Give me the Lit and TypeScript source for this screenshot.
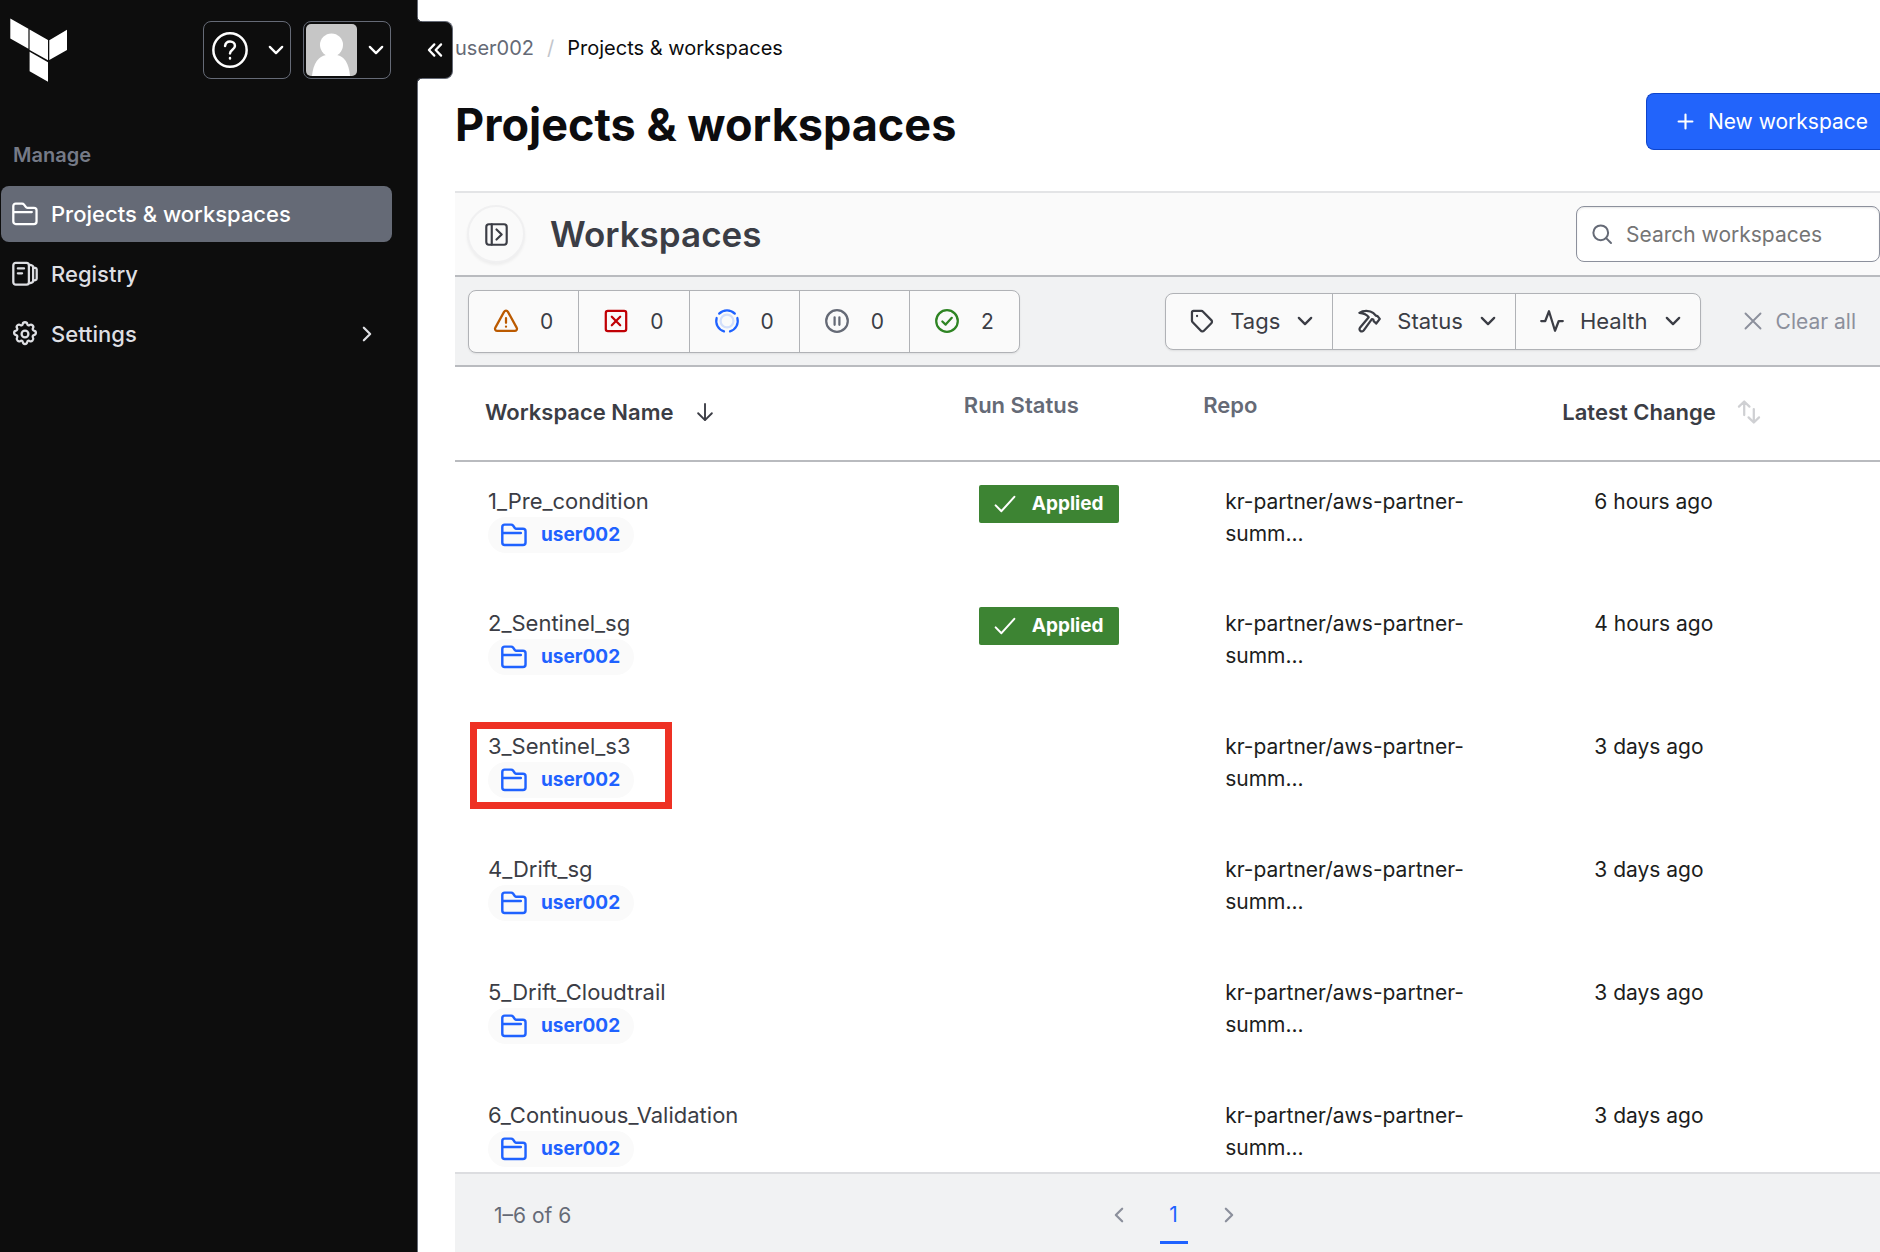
import { LitElement, html, svg, css, nothing, TemplateResult } from "lit";
import { customElement, property } from "lit/decorators.js";

/* Line icons on a 16-unit grid, drawn with the current text colour. */
const icons: Record<string, TemplateResult> = {
  folder: svg`<path d="M.8 12.6V3.1c0-.9.6-1.5 1.5-1.5h3.9c.5 0 .9.2 1.2.6l1.2 1.6c.2.3.5.4.8.4h4.1c.9 0 1.6.6 1.6 1.5v6.9c0 .9-.7 1.6-1.6 1.6H2.3c-.9 0-1.5-.7-1.5-1.6zM.9 6.8h11.3"/>`,
  registry: svg`<rect x=".8" y="1.2" width="9.6" height="13.4" rx="1.5"/><path d="M3.6 4.6h3.8M3.6 7.6h2.6M11 2.4l1.2.3c.5.1.8.5.8 1v8.6c0 .5-.3.9-.8 1l-1.2.3M13.2 3.9l1.3.4c.5.1.7.5.7 1v5.4c0 .5-.2.9-.7 1l-1.3.4"/>`,
  settings: svg`<circle cx="8" cy="8" r="2.1"/><path d="M6.6 1.9c.2-1.5 2.6-1.5 2.8 0 .1.7.8 1 1.4.6 1.3-.9 2.9.7 2.1 1.9-.4.7-.1 1.3.6 1.5 1.6.3 1.6 2.5 0 2.8-.7.2-1 .8-.6 1.5.8 1.3-.8 2.9-2.1 2.1-.6-.4-1.3-.1-1.4.6-.2 1.7-2.6 1.7-2.8 0-.1-.7-.8-1-1.4-.6-1.3.8-2.9-.8-2.1-2.1.4-.7.1-1.3-.6-1.5-1.6-.3-1.6-2.5 0-2.8.7-.2 1-.8.6-1.5-.8-1.3.8-2.8 2.1-1.9.6.4 1.3.1 1.4-.6z"/>`,
  help: svg`<circle cx="8" cy="8" r="7.4"/><path d="M5.8 6.2c.2-1.2 1-2 2.2-2s2.2.8 2.2 2c0 1.6-2.2 1.8-2.2 3.3M8 11.6v.2"/>`,
  down: svg`<path d="M2.5 5.2 8 10.8l5.5-5.6"/>`,
  left: svg`<path d="M10.8 2.5 5.2 8l5.6 5.5"/>`,
  right: svg`<path d="M5.2 2.5 10.8 8l-5.6 5.5"/>`,
  collapse: svg`<path d="M7.4 3 2.6 8l4.8 5M13.4 3 8.6 8l4.8 5"/>`,
  plus: svg`<path d="M8 1.5v13M1.5 8h13"/>`,
  close: svg`<path d="m2 2 12 12M14 2 2 14"/>`,
  panel: svg`<rect x=".9" y=".9" width="14.2" height="14.2" rx="1.8"/><path d="M4.7 1v14M8 4.5 11.6 8 8 11.5"/>`,
  search: svg`<circle cx="7" cy="7" r="5.9"/><path d="m11.3 11.3 3.9 3.9"/>`,
  warning: svg`<path d="M6.7 1.9.9 12.4c-.6 1 .1 2.2 1.3 2.2h11.6c1.2 0 1.9-1.2 1.3-2.2L9.3 1.9c-.6-1-2-1-2.6 0zM8 6v3.2M8 11.7v.1"/>`,
  error: svg`<rect x="1.2" y="1.2" width="13.6" height="13.6" rx="1.4"/><path d="m5.2 5.2 5.6 5.6M10.8 5.2l-5.6 5.6"/>`,
  running: svg`<circle cx="8" cy="8" r="4.3" opacity=".18"/><path d="M2.8 3.1a7.2 7.2 0 0 1 10.4 0M14.9 6a7.2 7.2 0 0 1-4.9 8.9M6 14.9A7.2 7.2 0 0 1 1.1 6"/>`,
  paused: svg`<circle cx="8" cy="8" r="7.2"/><path d="M6.4 5.5v5M9.6 5.5v5"/>`,
  success: svg`<circle cx="8" cy="8" r="7.2"/><path d="m4.9 8.3 2.2 2.1 4.1-4.5"/>`,
  tag: svg`<path d="M1.3 2.3v5.3c0 .5.2.9.5 1.2l5.3 5.6c.6.7 1.6.7 2.2.1l4.9-5c.6-.6.6-1.5 0-2.1L8.7 1.8c-.3-.3-.7-.5-1.1-.5H2.3c-.6 0-1 .4-1 1zM4.7 4.6v.1"/>`,
  hammer: svg`<path d="M1.6 2.6C4 .8 8.5.7 11 2.8l1.6 1.6 1 .3 1.6 1.9-2.4 3.1-1.7-1.6-.2-1-1-.3-5.4 7.5c-.6.8-1.6.9-2.3.3s-.7-1.5-.1-2.2l5.7-6.9C6.5 3.6 4 2.8 1.6 2.6z"/>`,
  pulse: svg`<path d="M.8 8h2.7L6 1.5l4 13L12.5 8h2.7"/>`,
  sorted: svg`<path d="M8 1.5v13M2.5 9 8 14.5 13.5 9"/>`,
  sortable: svg`<path d="M4.8 10V1M1.3 4.4 4.8 1l3.5 3.4M11.2 6v9M7.7 11.6l3.5 3.4 3.5-3.4"/>`,
  check: svg`<path d="m1.2 9 4.2 4.2L14.8 2.8"/>`,
};

@customElement("tf-icon")
export class TfIcon extends LitElement {
  @property() name = "";

  static styles = css`
    :host { display: inline-flex; flex: none; width: 24px; height: 24px; }
    .glyph { width: 100%; height: 100%; overflow: visible; fill: none; stroke: currentColor; stroke-width: var(--icon-stroke, 1.5); stroke-linecap: round; stroke-linejoin: round; }
  `;

  render() {
    return html`<svg class="glyph" viewBox="0 0 16 16" aria-hidden="true">${icons[this.name] ?? nothing}</svg>`;
  }
}

interface Workspace { name: string; project: string; applied?: boolean; repo: string; changed: string; marked?: boolean; }

const repo = "kr-partner/aws-partner-summ...";
const workspaces: Workspace[] = [
  { name: "1_Pre_condition", project: "user002", applied: true, repo, changed: "6 hours ago" },
  { name: "2_Sentinel_sg", project: "user002", applied: true, repo, changed: "4 hours ago" },
  { name: "3_Sentinel_s3", project: "user002", repo, changed: "3 days ago", marked: true },
  { name: "4_Drift_sg", project: "user002", repo, changed: "3 days ago" },
  { name: "5_Drift_Cloudtrail", project: "user002", repo, changed: "3 days ago" },
  { name: "6_Continuous_Validation", project: "user002", repo, changed: "3 days ago" },
];

const counters = [
  { icon: "warning", label: "Needs attention", count: 0 },
  { icon: "error", label: "Errored", count: 0 },
  { icon: "running", label: "Running", count: 0 },
  { icon: "paused", label: "On hold", count: 0 },
  { icon: "success", label: "Applied", count: 2 },
];

const filters = [
  { icon: "tag", label: "Tags" },
  { icon: "hammer", label: "Status" },
  { icon: "pulse", label: "Health" },
];

@customElement("tf-sidebar")
export class TfSidebar extends LitElement {
  static styles = css`
    :host { display: block; position: relative; background: #0d0d0d; border-right: 1px solid #656a76; color: #dedfe3; }
    .top { display: flex; align-items: flex-start; gap: 12px; padding: 18px 26px 0 10px; }
    .logo { width: 58px; height: 64px; margin-right: auto; fill: #fff; }
    .menu { display: flex; align-items: center; justify-content: space-between; width: 88px; height: 58px; margin-top: 3px; padding: 0 5px 0 8px; box-sizing: border-box; border: 1px solid #656a76; border-radius: 8px; background: transparent; color: #fff; }
    .account { padding-left: 2px; }
    .question { width: 36px; height: 36px; --icon-stroke: 1.1; }
    .chevron { width: 18px; height: 18px; --icon-stroke: 2; }
    .avatar { width: 51px; height: 52px; border-radius: 5px; }
    .heading { margin: 0; padding: 57px 13px 0; font-size: 20px; line-height: 32px; font-weight: 600; color: #757a87; }
    .list { display: flex; flex-direction: column; gap: 4px; margin: 0; padding: 15px 25px 0 1px; list-style: none; }
    .item { display: flex; align-items: center; gap: 13px; height: 56px; padding: 0 11px; border-radius: 8px; color: #dedfe3; font-size: 22px; font-weight: 500; text-decoration: none; }
    .item.current { background: #656a76; color: #fff; }
    .item-icon { width: 26px; height: 26px; --icon-stroke: 1.4; }
    .more { width: 18px; height: 18px; margin-left: auto; margin-right: 5px; --icon-stroke: 2; }
    .toggle { position: absolute; top: 21px; left: 100%; display: flex; align-items: center; justify-content: center; width: 36px; height: 58px; padding: 0; border: 1px solid #656a76; border-left: 0; border-radius: 0 8px 8px 0; background: #0d0d0d; color: #fff; }
    .toggle::before, .toggle::after { content: ""; position: absolute; left: 0; width: 5px; height: 5px; }
    .toggle::before { bottom: 100%; background: radial-gradient(circle at 100% 0, transparent 4px, #656a76 4px, #0d0d0d 6px); }
    .toggle::after { top: 100%; background: radial-gradient(circle at 100% 100%, transparent 4px, #656a76 4px, #0d0d0d 6px); }
    .toggle-icon { width: 18px; height: 18px; --icon-stroke: 2; }
  `;

  render() {
    return html`
      <div class="top">
        <svg class="logo" viewBox="0 0 58 64" role="img" aria-label="Terraform">
          <path d="M.3.5 18.4 10.8v20L.3 20.6zM19.6 11.6 38 22v20.3L19.6 31.9zM39.3 22.2 57 11.8V32L39.3 42.1zM19.6 33.8 38 44.3v19.4L19.6 53.3z"/>
        </svg>
        <button class="menu" aria-label="Help">
          <tf-icon class="question" name="help"></tf-icon><tf-icon class="chevron" name="down"></tf-icon>
        </button>
        <button class="menu account" aria-label="Account">
          <svg class="avatar" viewBox="0 0 51 52" aria-hidden="true">
            <rect width="51" height="52" fill="#c6c6c6"/>
            <circle cx="25.5" cy="21" r="11.5" fill="#fff"/>
            <path d="M6 52c1-13 7-20 14-21h11c7 1 12 8 13 21z" fill="#fff"/>
          </svg>
          <tf-icon class="chevron" name="down"></tf-icon>
        </button>
      </div>
      <button class="toggle" aria-label="Collapse navigation"><tf-icon class="toggle-icon" name="collapse"></tf-icon></button>
      <nav aria-label="Manage">
        <h2 class="heading">Manage</h2>
        <ul class="list">
          <li><a class="item current" href="#workspaces" aria-current="page"><tf-icon class="item-icon" name="folder"></tf-icon>Projects &amp; workspaces</a></li>
          <li><a class="item" href="#registry"><tf-icon class="item-icon" name="registry"></tf-icon>Registry</a></li>
          <li><a class="item" href="#settings"><tf-icon class="item-icon" name="settings"></tf-icon>Settings<tf-icon class="more" name="right"></tf-icon></a></li>
        </ul>
      </nav>
    `;
  }
}

@customElement("tf-workspace-table")
export class TfWorkspaceTable extends LitElement {
  @property({ attribute: false }) rows: Workspace[] = [];

  static styles = css`
    :host { display: block; }
    .table { width: 100%; table-layout: fixed; border-collapse: collapse; font-size: 21px; line-height: 32px; }
    .col-name { width: 33.6%; }
    .col-status { width: 16.8%; }
    .col-repo { width: 25.2%; }
    .head { height: 94px; box-sizing: border-box; padding: 22px 0 0 30px; border-bottom: 2px solid #b9bbbf; text-align: left; vertical-align: top; font-size: 22px; font-weight: 600; color: #656a76; }
    .head.sort { padding-top: 29px; }
    .sort-button { display: flex; align-items: center; gap: 21px; padding: 0; border: 0; background: none; font: inherit; color: #3b3d45; }
    .sort-icon { width: 20px; height: 20px; }
    .sort-icon.idle { width: 24px; height: 24px; color: #cfd0d3; }
    .cell { height: 123px; box-sizing: border-box; padding: 24px 0 0; vertical-align: top; color: #1c1d20; }
    .row:last-child .cell { height: 96px; }
    .name-cell { padding-left: 33px; }
    .status-cell { padding-left: 45px; }
    .repo-cell { padding-left: 52px; padding-right: 50px; }
    .changed-cell { padding-left: 62px; }
    .identity { position: relative; display: inline-flex; flex-direction: column; align-items: flex-start; }
    .marked::after { content: ""; position: absolute; top: -9px; bottom: -11px; left: -18px; width: 188px; border: 7px solid #ee3124; pointer-events: none; }
    .name { line-height: 31px; font-size: 22px; color: #3b3d45; text-decoration: none; }
    .project { display: inline-flex; align-items: center; gap: 14px; height: 36px; padding: 0 14px 0 13px; border-radius: 18px; background: #fafafa; color: #1f62ff; font-size: 19px; font-weight: 700; text-decoration: none; }
    .project-icon { width: 26px; height: 26px; }
    .badge { display: inline-flex; align-items: center; gap: 16px; height: 38px; margin-top: -1px; padding: 0 15px; border-radius: 2px; background: #3d8433; color: #fff; font-size: 19px; font-weight: 700; }
    .badge-icon { width: 22px; height: 22px; }
  `;

  render() {
    return html`
      <table class="table">
        <colgroup><col class="col-name" /><col class="col-status" /><col class="col-repo" /><col /></colgroup>
        <thead>
          <tr>
            <th class="head sort" scope="col" aria-sort="ascending"><button class="sort-button">Workspace Name<tf-icon class="sort-icon" name="sorted"></tf-icon></button></th>
            <th class="head" scope="col">Run Status</th>
            <th class="head" scope="col">Repo</th>
            <th class="head sort" scope="col"><button class="sort-button">Latest Change<tf-icon class="sort-icon idle" name="sortable"></tf-icon></button></th>
          </tr>
        </thead>
        <tbody>
          ${this.rows.map((row) => html`
            <tr class="row">
              <td class="cell name-cell">
                <div class="identity ${row.marked ? "marked" : ""}">
                  <a class="name" href="#${row.name}">${row.name}</a>
                  <a class="project" href="#${row.project}"><tf-icon class="project-icon" name="folder"></tf-icon>${row.project}</a>
                </div>
              </td>
              <td class="cell status-cell">${row.applied ? html`<span class="badge"><tf-icon class="badge-icon" name="check"></tf-icon>Applied</span>` : nothing}</td>
              <td class="cell repo-cell">${row.repo}</td>
              <td class="cell changed-cell">${row.changed}</td>
            </tr>`)}
        </tbody>
      </table>
    `;
  }
}

@customElement("app-root")
export class AppRoot extends LitElement {
  static styles = css`
    :host { display: grid; grid-template-columns: 418px minmax(0, 1fr); min-height: 100vh; background: #fff; font-family: Inter, "Liberation Sans", sans-serif; color: #0c0c0e; }
    .main { display: flex; flex-direction: column; padding-left: 37px; }
    .crumbs { display: flex; gap: 13px; padding-top: 32px; font-size: 20px; line-height: 32px; }
    .crumb { color: #656a76; text-decoration: none; }
    .slash { color: #c2c5cb; }
    .title-row { display: flex; align-items: flex-start; justify-content: space-between; padding: 29px 0 34px; }
    .title { margin: 0; font-size: 45px; line-height: 64px; font-weight: 700; }
    .create { display: flex; align-items: center; gap: 14px; height: 57px; padding: 0 12px 0 30px; border: 1px solid #0d44cc; border-right: 0; border-radius: 8px 0 0 8px; background: #2264fb; color: #fff; font: inherit; font-size: 21px; }
    .create-icon { width: 17px; height: 17px; --icon-stroke: 2; }
    .panel { display: flex; flex: 1; flex-direction: column; border-top: 2px solid #e3e4e6; }
    .panel-head { display: flex; align-items: center; height: 82px; background: #fafafa; border-bottom: 2px solid #b9bbbf; }
    .expand { display: flex; align-items: center; justify-content: center; width: 58px; height: 58px; margin: 0 25px 0 12px; padding: 0; border: 2px solid #f0f0f1; border-radius: 50%; background: #fafafa; color: #3b3d45; box-shadow: 0 2px 3px #0000000d; }
    .expand-icon { width: 23px; height: 23px; }
    .subtitle { margin: 0; font-size: 35px; line-height: 48px; font-weight: 600; color: #3b3d45; }
    .search { display: flex; align-items: center; gap: 14px; width: 304px; height: 56px; box-sizing: border-box; margin-left: auto; padding: 0 15px; border: 1px solid #8c909c; border-radius: 8px; background: #fff; color: #656a76; box-shadow: inset 0 1px 2px #0000001a; }
    .search-icon { width: 20px; height: 20px; --icon-stroke: 1.6; }
    .search-input { min-width: 0; flex: 1; padding: 0; border: 0; outline: 0; background: none; font: inherit; font-size: 21px; color: #3b3d45; }
    .search-input::placeholder { color: #757575; opacity: 1; }
    .bar { display: flex; align-items: center; height: 88px; padding-left: 13px; background: #f1f2f3; border-bottom: 2px solid #b9bbbf; }
    .group { display: flex; border: 1px solid #b0b2b6; border-radius: 8px; background: #fafafa; overflow: hidden; box-shadow: 0 1px 2px #00000014; }
    .segment { display: flex; align-items: center; border: 0; border-left: 1px solid #b0b2b6; background: none; font: inherit; color: #3b3d45; }
    .segment:first-child { border-left: 0; }
    .counter { gap: 22px; height: 61px; padding: 0 25px; font-size: 21px; }
    .filter { gap: 16px; height: 55px; padding: 0 18px 0 24px; font-size: 22px; }
    .filters { margin-left: auto; }
    .chevron { width: 18px; height: 18px; --icon-stroke: 2; }
    .warning { color: #bb5a00; }
    .error { color: #c00005; }
    .running { color: #1f62ff; }
    .paused { color: #656a76; }
    .success { color: #2e8423; }
    .clear { display: flex; align-items: center; gap: 13px; margin: 0 24px 0 42px; padding: 0; border: 0; background: none; font: inherit; font-size: 21px; color: #8c909c; }
    .clear-icon { width: 20px; height: 20px; }
    .foot { display: grid; grid-template-columns: 1fr auto 1fr; flex: 1; min-height: 76px; padding: 0 27px 0 39px; border-top: 2px solid #dcdde0; background: #f1f2f3; font-size: 21px; color: #656a76; }
    .range { padding-top: 26px; line-height: 32px; }
    .pager { display: flex; align-items: flex-start; gap: 32px; }
    .step { display: flex; padding: 32px 0 0; border: 0; background: none; color: #8c909c; }
    .page { display: flex; align-items: center; justify-content: center; width: 28px; height: 70px; padding-top: 14px; box-sizing: border-box; border-bottom: 3px solid #1f62ff; color: #1f62ff; text-decoration: none; }
  `;

  render() {
    return html`
      <tf-sidebar></tf-sidebar>
      <main class="main">
        <nav class="crumbs" aria-label="Breadcrumb">
          <a class="crumb" href="#org">user002</a><span class="slash">/</span><span>Projects &amp; workspaces</span>
        </nav>
        <div class="title-row">
          <h1 class="title">Projects &amp; workspaces</h1>
          <button class="create"><tf-icon class="create-icon" name="plus"></tf-icon>New workspace</button>
        </div>
        <section class="panel">
          <div class="panel-head">
            <button class="expand" aria-label="Show projects"><tf-icon class="expand-icon" name="panel"></tf-icon></button>
            <h2 class="subtitle">Workspaces</h2>
            <label class="search">
              <tf-icon class="search-icon" name="search"></tf-icon>
              <input class="search-input" type="text" placeholder="Search workspaces" aria-label="Search workspaces" />
            </label>
          </div>
          <div class="bar">
            <div class="group">
              ${counters.map((c) => html`<button class="segment counter" aria-label="${c.label}: ${c.count}"><tf-icon class="${c.icon}" name=${c.icon}></tf-icon>${c.count}</button>`)}
            </div>
            <div class="group filters">
              ${filters.map((f) => html`<button class="segment filter"><tf-icon name=${f.icon}></tf-icon>${f.label}<tf-icon class="chevron" name="down"></tf-icon></button>`)}
            </div>
            <button class="clear"><tf-icon class="clear-icon" name="close"></tf-icon>Clear all</button>
          </div>
          <tf-workspace-table .rows=${workspaces}></tf-workspace-table>
          <footer class="foot">
            <span class="range">1–6 of 6</span>
            <nav class="pager" aria-label="Pagination">
              <button class="step" aria-label="Previous page"><tf-icon class="chevron" name="left"></tf-icon></button>
              <a class="page" href="#page-1" aria-current="page">1</a>
              <button class="step" aria-label="Next page"><tf-icon class="chevron" name="right"></tf-icon></button>
            </nav>
          </footer>
        </section>
      </main>
    `;
  }
}
